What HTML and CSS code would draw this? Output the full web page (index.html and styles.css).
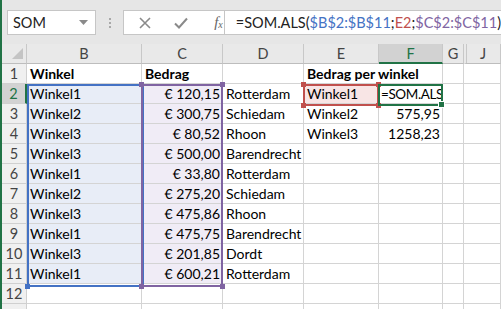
FILE: index.html
```html
<!DOCTYPE html>
<html>
<head>
  <meta charset="utf-8">
  <title>SOM.ALS</title>
  <link rel="stylesheet" href="styles.css">
</head>
<body>
  <div class="app">
    <div class="toolbar">
      <div class="namebox">
        <span>SOM</span>
        <svg class="caret" width="9" height="5" viewBox="0 0 9 5"><path d="M0 0h9L4.5 5z" fill="#8a8a8a"/></svg>
      </div>
      <div class="grip"><i></i><i></i><i></i></div>
      <div class="fbuttons">
        <svg width="12" height="12" viewBox="0 0 12 12"><path d="M1 1l10 10M11 1L1 11" stroke="#8a8a8a" stroke-width="1.6"/></svg>
        <svg width="14" height="12" viewBox="0 0 14 12"><path d="M1 6.5l4 4L13 1.5" stroke="#8a8a8a" stroke-width="2" fill="none"/></svg>
        <span class="fx">f<sub>x</sub></span>
      </div>
      <div class="formula">=SOM.ALS(<span class="ref-b">$B$2:$B$11</span>;<span class="ref-e">E2</span>;<span class="ref-c">$C$2:$C$11</span>)</div>
    </div>

    <div class="sheet">
      <div class="hd corner"><span class="tri"></span></div>
      <div class="hd">B</div>
      <div class="hd">C</div>
      <div class="hd">D</div>
      <div class="hd">E</div>
      <div class="hd hd-sel">F</div>
      <div class="hd">G</div>
      <div class="hd hd-j">J</div>

      <div class="rh">1</div>
      <div class="c b">Winkel</div>
      <div class="c b">Bedrag</div>
      <div class="c"></div>
      <div class="c b span2">Bedrag per winkel</div>
      <div class="c"></div>
      <div class="c"></div>

      <div class="rh rh-sel">2</div>
      <div class="c blue">Winkel1</div>
      <div class="c purple num">€ 120,15</div>
      <div class="c">Rotterdam</div>
      <div class="c pink">Winkel1</div>
      <div class="c edit">=SOM.ALS</div>
      <div class="c"></div>
      <div class="c"></div>

      <div class="rh">3</div>
      <div class="c blue">Winkel2</div>
      <div class="c purple num">€ 300,75</div>
      <div class="c">Schiedam</div>
      <div class="c">Winkel2</div>
      <div class="c num">575,95</div>
      <div class="c"></div>
      <div class="c"></div>

      <div class="rh">4</div>
      <div class="c blue">Winkel3</div>
      <div class="c purple num">€ 80,52</div>
      <div class="c">Rhoon</div>
      <div class="c">Winkel3</div>
      <div class="c num">1258,23</div>
      <div class="c"></div>
      <div class="c"></div>

      <div class="rh">5</div>
      <div class="c blue">Winkel3</div>
      <div class="c purple num">€ 500,00</div>
      <div class="c">Barendrecht</div>
      <div class="c"></div><div class="c"></div><div class="c"></div><div class="c"></div>

      <div class="rh">6</div>
      <div class="c blue">Winkel1</div>
      <div class="c purple num">€ 33,80</div>
      <div class="c">Rotterdam</div>
      <div class="c"></div><div class="c"></div><div class="c"></div><div class="c"></div>

      <div class="rh">7</div>
      <div class="c blue">Winkel2</div>
      <div class="c purple num">€ 275,20</div>
      <div class="c">Schiedam</div>
      <div class="c"></div><div class="c"></div><div class="c"></div><div class="c"></div>

      <div class="rh">8</div>
      <div class="c blue">Winkel3</div>
      <div class="c purple num">€ 475,86</div>
      <div class="c">Rhoon</div>
      <div class="c"></div><div class="c"></div><div class="c"></div><div class="c"></div>

      <div class="rh">9</div>
      <div class="c blue">Winkel1</div>
      <div class="c purple num">€ 475,75</div>
      <div class="c">Barendrecht</div>
      <div class="c"></div><div class="c"></div><div class="c"></div><div class="c"></div>

      <div class="rh">10</div>
      <div class="c blue">Winkel3</div>
      <div class="c purple num">€ 201,85</div>
      <div class="c">Dordt</div>
      <div class="c"></div><div class="c"></div><div class="c"></div><div class="c"></div>

      <div class="rh">11</div>
      <div class="c blue">Winkel1</div>
      <div class="c purple num">€ 600,21</div>
      <div class="c">Rotterdam</div>
      <div class="c"></div><div class="c"></div><div class="c"></div><div class="c"></div>

      <div class="rh">12</div>
      <div class="c"></div><div class="c"></div><div class="c"></div><div class="c"></div><div class="c"></div><div class="c"></div><div class="c"></div>

      <div class="rh"></div>
      <div class="c"></div><div class="c"></div><div class="c"></div><div class="c"></div><div class="c"></div><div class="c"></div><div class="c"></div>

      <div class="range range-b"><i class="h bl"></i></div>
      <div class="range range-c"><i class="h tl"></i><i class="h tr"></i><i class="h bl"></i><i class="h br"></i></div>
      <div class="range range-e"><i class="h tl"></i><i class="h tr"></i><i class="h bl"></i><i class="h br"></i></div>
      <div class="range range-f"><i class="h br"></i></div>
    </div>
  </div>
</body>
</html>
```

FILE: styles.css
```css
body {
  margin: 0;
  font-family: Lato, "Liberation Sans", sans-serif;
  font-size: 14px;
  color: #000;
  overflow: hidden;
}

.app {
  border-left: 2px solid #217346;
  height: 309px;
  box-sizing: border-box;
  background: #fff;
}

/* formula bar */
.toolbar {
  height: 44px;
  background: #e6e6e6;
  display: flex;
  align-items: flex-start;
  padding: 10px 0 0 5px;
  box-sizing: border-box;
}
.namebox {
  width: 100px;
  height: 25px;
  box-sizing: border-box;
  background: #fff;
  border: 1px solid #c6c6c6;
  display: flex;
  align-items: center;
  justify-content: space-between;
  padding: 0 7px 0 5px;
  color: #222;
  font-size: 14.5px;
}
.grip {
  width: 31px;
  height: 25px;
  display: flex;
  flex-direction: column;
  align-items: center;
  justify-content: center;
  gap: 2px;
}
.grip i {
  width: 2px;
  height: 2px;
  background: #a8a8a8;
}
.fbuttons {
  width: 113px;
  height: 25px;
  box-sizing: border-box;
  background: #fff;
  border: 1px solid #c6c6c6;
  border-right: 0;
  display: flex;
  align-items: center;
  padding-left: 15px;
  gap: 23px;
}
.fx {
  font-family: "Liberation Serif", serif;
  font-style: italic;
  font-size: 15px;
  color: #666;
  margin-left: 3px;
}
.fx sub {
  font-size: 10px;
  vertical-align: -1px;
}
.formula {
  flex: 1;
  height: 25px;
  box-sizing: border-box;
  background: #fff;
  border: 1px solid #c6c6c6;
  border-right: 0;
  padding-left: 11px;
  line-height: 23px;
  white-space: nowrap;
  color: #222;
  font-size: 14.5px;
}
.ref-b { color: #4472c4; }
.ref-e { color: #c0504d; }
.ref-c { color: #8064a2; }

/* grid */
.sheet {
  position: relative;
  display: grid;
  grid-template-columns: 25px 115px 81px 81px 75px 64px 21px 1fr;
  grid-auto-rows: 20px;
}
.hd, .rh {
  background: #f0f0f0;
  color: #444;
  border-right: 1px solid #d0d0d0;
  border-bottom: 1px solid #d0d0d0;
  box-sizing: border-box;
  text-align: center;
  line-height: 20px;
  font-size: 14.5px;
}
.hd {
  background: #e9e9e9;
  border-right-color: #c8c8c8;
  border-bottom-color: #bdbdbd;
}
.corner {
  position: relative;
}
.tri {
  position: absolute;
  right: 3px;
  bottom: 4px;
  width: 0;
  height: 0;
  border-left: 11px solid transparent;
  border-bottom: 11px solid #c4c4c4;
}
.hd-sel {
  background: #d2d2d2;
  color: #217346;
  border-bottom: 2px solid #217346;
}
.hd-j {
  border-left: 2px solid #e9e9e9;
  box-shadow: inset 1px 0 0 #c8c8c8;
}
.rh-sel {
  background: #d2d2d2;
  color: #217346;
  border-right: 2px solid #217346;
}
.c {
  border-right: 1px solid #d4d4d4;
  border-bottom: 1px solid #d4d4d4;
  box-sizing: border-box;
  padding: 0 2px 0 3px;
  line-height: 20px;
  white-space: nowrap;
  overflow: hidden;
}
.b { font-weight: bold; }
.span2 {
  grid-column: span 2;
  overflow: visible;
}
.num { text-align: right; }
.blue { background: #e8edf7; }
.purple { background: #f0ecf6; }
.pink { background: #f8e5e5; }
.edit {
  padding: 0 0 0 2px;
  letter-spacing: -0.4px;
  font-size: 13.5px;
}

/* highlighted ranges */
.range {
  position: absolute;
  box-sizing: border-box;
  border: 2px solid;
  pointer-events: none;
}
.range-b { left: 25px; top: 40px; width: 117px; height: 203px; border-color: #4472c4; }
.range-c { left: 139px; top: 40px; width: 82px; height: 203px; border-color: #8064a2; }
.range-e { left: 301px; top: 40px; width: 76px; height: 22px; border-color: #c0504d; }
.range-f { left: 376px; top: 40px; width: 65px; height: 22px; border-color: #217346; }
.h {
  position: absolute;
  width: 5px;
  height: 5px;
}
.range-b .h { background: #4472c4; }
.range-c .h { background: #8064a2; }
.range-e .h { background: #c0504d; }
.range-f .h { background: #217346; border: 1px solid #fff; }
.tl { left: -4px; top: -4px; }
.tr { right: -4px; top: -4px; }
.bl { left: -4px; bottom: -4px; }
.br { right: -4px; bottom: -4px; }
```
